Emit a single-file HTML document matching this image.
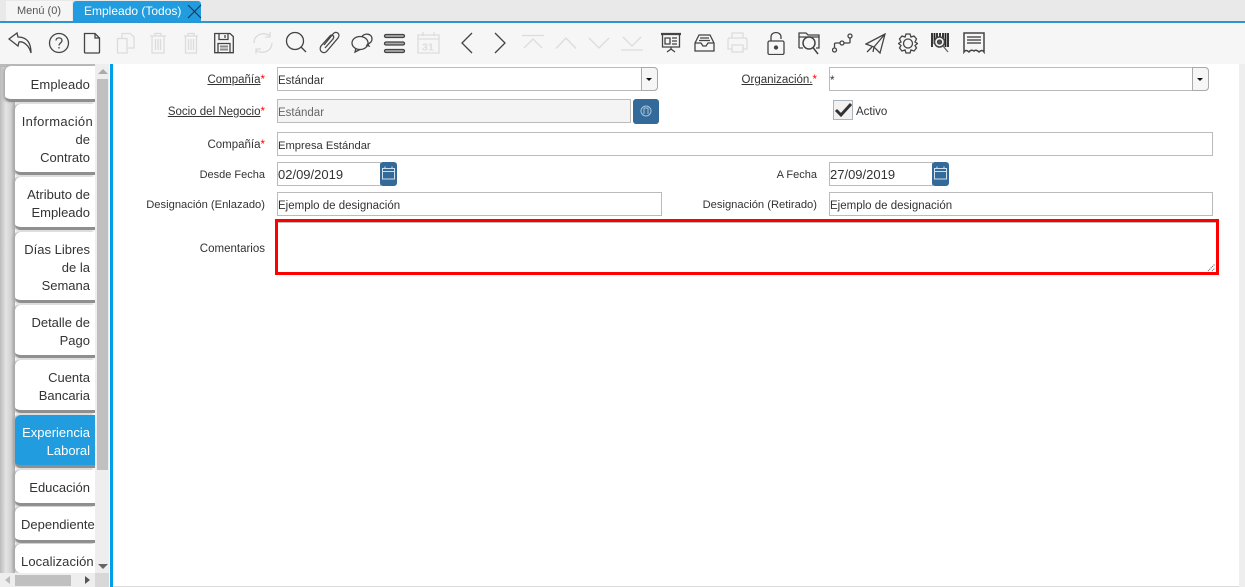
<!DOCTYPE html>
<html><head><meta charset="utf-8"><style>
html,body{margin:0;padding:0}
body{width:1245px;height:587px;position:relative;overflow:hidden;background:#fff;font-family:"Liberation Sans",sans-serif;font-size:11.5px;color:#333}
div,span,svg{position:absolute;box-sizing:border-box}
.lb{text-align:right;white-space:nowrap;line-height:16px;color:#333}
.lb u{position:static}.lb b{color:#f00;font-weight:normal}
.in{border:1px solid #bbb;background:#fff;padding-left:0;padding-top:2px;white-space:nowrap;color:#333}
.tab{left:15px;width:80px;background:#fff;border-radius:6px 0 0 6px;border-bottom:3px solid #8f8f8f;text-align:right;padding-right:5px;font-size:13px;line-height:18px;color:#333;box-shadow:-2px 0 2px #aaa;white-space:nowrap;overflow:hidden}
.ic{top:28px;fill:none;stroke:#444;stroke-width:1.3}
.f{stroke:#dcdcdc}
.btn{background:#336a99;border-radius:3px}
</style></head><body>
<div style="left:0;top:0;width:1245px;height:21px;background:#e9e9e9"></div>
<div style="left:6px;top:1px;width:66px;height:20px;background:#f5f5f5;text-align:center;font-size:11px;line-height:21px;color:#555">Menú (0)</div>
<div style="left:73px;top:1px;width:128px;height:20px;background:#219ddf;border-radius:3px 3px 0 0;color:#fff;font-size:12px;line-height:21px;padding-left:11px;white-space:nowrap">Empleado (Todos)</div>
<svg style="left:187px;top:4px" width="15" height="15" fill="none" stroke="#234" stroke-width="1.1"><path d="M1 1L14 14M14 1L1 14"/></svg>
<div style="left:0;top:21px;width:1245px;height:2px;background:#2f94cf"></div>
<div style="left:0;top:23px;width:1245px;height:41px;background:#f6f6f6"></div>

<svg class="ic" style="left:8px" width="26" height="28" stroke-width="1.500"><path d="M1 11L9 5L10 9C20 9 23 16 23 25C21 17 15 13 11 14L10 18Z"/></svg>
<svg class="ic" style="left:48px;top:29px" width="22" height="28"><circle cx="11" cy="14" r="9.500"/><path d="M8 11.500C8 8 14 8 14 11.500C14 14 11 14 11 16.500M11 18v1.500"/></svg>
<svg class="ic" style="left:83px;top:32px" width="18" height="22"><path d="M1.500 1.500H12L16.500 6V20Q16.500 21 15.500 21H2.500Q1.500 21 1.500 20ZM12 1.500V6H16.500"/></svg>
<svg class="ic f" style="left:116px;top:32px" width="20" height="22"><path d="M1.500 6.500H11V21H1.500ZM6 6.500V1.500H14L18 5V16H11"/></svg>
<svg class="ic f" style="left:149px;top:32px" width="18" height="22"><path d="M1 4H17M6 4V1.500H12V4M3 4V21H15V4M6.500 7V18M9 7V18M11.500 7V18"/></svg>
<svg class="ic f" style="left:182px;top:32px" width="18" height="22"><path d="M2 4H16M6 4V1.500H12V4M3.500 4V21H14.500V4M6.500 7V18M9 7V18M11.500 7V18"/></svg>
<svg class="ic" style="left:214px;top:32px" width="20" height="22"><path d="M.7 1.500H16L19.300 4.500V20.700H.7ZM5 1.500V7.500H14V1.500M11 3V6M4 11.500H16V20.700H4Z"/><path d="M6 14.500H14M6 17.500H14" stroke="#888" stroke-width="2"/></svg>
<svg class="ic f" style="left:252px;top:30px" width="22" height="26"><path d="M2 13C2 5 11 1 18 6M20 13C20 21 11 25 4 20M18 2V7H13M4 24V19H9"/></svg>
<svg class="ic" style="left:285px;top:31px" width="22" height="22" stroke-width="1.500"><circle cx="10" cy="10" r="8.500"/><path d="M16 16L21 21"/></svg>
<svg class="ic" style="left:318px;top:28px" width="22" height="26" stroke="#666"><path d="M6 17L15 6C18 2 23 6 20 10L9 23C6 27 0 23 3 18L12 8C14 6 17 8 15 11L7 20"/></svg>
<svg class="ic" style="left:351px" width="23" height="27"><ellipse cx="9" cy="15" rx="8" ry="6.500"/><path d="M5 20L4 24L9 21.500M11 8.500C13 5 21 5 21 11C21 14 19 15 17 16L18 18L15 17"/></svg>
<svg class="ic" style="left:383px" width="23" height="27" stroke="#555"><rect x="1.500" y="6.500" width="20" height="3" rx="1.500" fill="#aaa"/><rect x="1.500" y="14" width="20" height="3" rx="1.500" fill="#aaa"/><rect x="1.500" y="21.500" width="20" height="3" rx="1.500" fill="#aaa"/></svg>
<svg class="ic f" style="left:417px;top:31px" width="23" height="24"><path d="M1 4H22V22H1ZM1 8H22M6 1V5M17 1V5"/><text x="5" y="19.500" font-size="10.500" font-family="Liberation Sans" fill="#ddd" stroke="none" font-weight="bold">31</text></svg>

<svg class="ic" style="left:460px;top:32px" width="14" height="22" stroke="#555"><path d="M12 1L2 11L12 21"/></svg>
<svg class="ic" style="left:493px;top:32px" width="14" height="22" stroke="#555"><path d="M2 1L12 11L2 21"/></svg>
<svg class="ic f" style="left:522px;top:34px" width="22" height="16"><path d="M0 1.500H22M2 14L11 5L20 14"/></svg>
<svg class="ic f" style="left:555px;top:36px" width="22" height="14"><path d="M1 12.500L11 2L21 12.500"/></svg>
<svg class="ic f" style="left:588px;top:36px" width="22" height="14"><path d="M1 2L11 12L21 2"/></svg>
<svg class="ic f" style="left:621px;top:36px" width="22" height="16"><path d="M2 1L11 10L20 1M0 14H22"/></svg>

<svg class="ic" style="left:660px;top:32px" width="22" height="21"><path d="M1 2H21" stroke-width="2.200"/><path d="M2.500 3V15H19.500V3M5 6H10V12H5ZM12 6H17M12 9H17M12 12H17M11 15V18M7 20L11 17L15 20"/></svg>
<svg class="ic" style="left:694px;top:34px" width="21" height="18"><path d="M5 1H16L20 9V17H1V9ZM1 9H7L9 12H12L14 9H20M6 4H15M5 6.500H16"/></svg>
<svg class="ic f" style="left:727px;top:32px" width="21" height="21"><path d="M5 6V1H16V6M1 8Q1 6 3 6H18Q20 6 20 8V17H16V13H5V17H1ZM5 13V20H16V13"/></svg>
<svg class="ic" style="left:767px;top:31px" width="18" height="24"><rect x="1" y="10" width="16" height="13.500" rx="1.500"/><path d="M4 10V6C4 0 14 0 14 6V8"/><circle cx="9" cy="16.500" r="1.500" fill="#444"/></svg>
<svg class="ic" style="left:798px;top:31px" width="23" height="24"><path d="M1 17V2H8L10 4H21V17H18M1 17H5M1 6H21"/><circle cx="11" cy="12" r="6" stroke-width="1.500"/><path d="M15 16.500L20 23" stroke-width="1.500"/></svg>
<svg class="ic" style="left:832px;top:33px" width="21" height="20" stroke="#555"><circle cx="2.500" cy="17" r="2"/><circle cx="10" cy="10" r="2"/><circle cx="18" cy="3" r="2"/><path d="M2.500 15V11Q2.500 10 4 10H8M12 10H17Q18 10 18 9V5"/></svg>
<svg class="ic" style="left:865px;top:33px" width="21" height="21" stroke="#555"><path d="M1 11L20 1L15 20L9 14ZM20 1L9 14L8 19M2 19L7 14"/></svg>
<svg class="ic" style="left:898px;top:33px" width="20" height="21" stroke="#555"><path d="M8 1H12L13 4L16 3L18.500 6L17 9L19.500 10.500L17 12.500L18.500 15L16 18L13 17L12 20H8L7 17L4 18L1.500 15L3 12.500L.5 10.500L3 9L1.500 6L4 3L7 4Z"/><circle cx="10" cy="10.500" r="4.500"/></svg>
<svg class="ic" style="left:931px;top:33px" width="19" height="21"><path d="M1 0V14M3.500 0V11M6 0V5M9 0V4M12 0V5M14.500 0V14M17 0V14" stroke-width="1.800" stroke="#222"/><circle cx="8.500" cy="9" r="5" fill="#f6f6f6" stroke-width="1.500"/><circle cx="8.500" cy="9" r="2" fill="#555"/><path d="M12 13L17 19" stroke="#666"/></svg>
<svg class="ic" style="left:963px;top:32px" width="22" height="22" stroke="#222"><path d="M1 1H21V20Q19 17 16 20Q13 17 11 19Q8 17 6 20Q3 17 1 20Z" stroke-width="1.500"/><path d="M4 5H18M4 8H18M4 11H18" stroke="#555" stroke-width="1.500"/></svg>

<div style="left:0;top:64px;width:15px;height:509px;background:linear-gradient(90deg,#bbb,#e4e4e4 40%,#d0d0d0 75%,#aaa)"></div>
<div style="left:0;top:64px;width:95px;height:3px;background:#bbb"></div>
<div class="tab" style="left:5px;width:90px;top:66px;height:36px;line-height:37px;letter-spacing:.1px">Empleado</div>
<div class="tab" style="top:104px;height:71px;padding-top:9px;padding-right:2px"><span style="position:static;letter-spacing:.3px">Información</span><br><span style="position:static;padding-right:3px">de</span><br><span style="position:static;padding-right:3px">Contrato</span></div>
<div class="tab" style="top:177px;height:53px;padding-top:9px">Atributo de<br>Empleado</div>
<div class="tab" style="top:232px;height:71px;padding-top:9px">Días Libres<br>de la<br>Semana</div>
<div class="tab" style="top:305px;height:53px;padding-top:9px">Detalle de<br>Pago</div>
<div class="tab" style="top:360px;height:53px;padding-top:9px">Cuenta<br>Bancaria</div>
<div class="tab" style="top:415px;height:53px;padding-top:9px;background:#219ddf;color:#fff">Experiencia<br>Laboral</div>
<div class="tab" style="top:470px;height:36px;line-height:36px">Educación</div>
<div class="tab" style="top:507px;height:36px;line-height:36px;text-align:left;padding-left:6px;padding-right:0">Dependientes</div>
<div class="tab" style="top:544px;height:29px;border-bottom:0;padding-top:9px;text-align:left;padding-left:6px;letter-spacing:.1px">Localización</div>

<div style="left:95px;top:64px;width:14px;height:509px;background:#eee"></div>
<div style="left:97px;top:79px;width:11px;height:391px;background:#c0c0c0"></div>
<div style="left:98px;top:69px;width:0;height:0;border:5px solid transparent;border-bottom:5px solid #aaa;border-top:0"></div>
<div style="left:98px;top:564px;width:0;height:0;border:5px solid transparent;border-top:5px solid #666;border-bottom:0"></div>
<div style="left:0;top:573px;width:95px;height:14px;background:#eee"></div>
<div style="left:95px;top:573px;width:14px;height:14px;background:#d8d8d8"></div>
<div style="left:15px;top:575px;width:56px;height:11px;background:#c0c0c0"></div>
<div style="left:5px;top:576px;width:0;height:0;border:4px solid transparent;border-right:5px solid #bbb;border-left:0"></div>
<div style="left:85px;top:576px;width:0;height:0;border:4px solid transparent;border-left:5px solid #555;border-right:0"></div>
<div style="left:110px;top:64px;width:3px;height:523px;background:#00a0e8"></div>
<div style="left:1239px;top:64px;width:6px;height:523px;background:#eee"></div>
<div style="left:113px;top:586px;width:1126px;height:1px;background:#ddd"></div>

<div class="lb" style="right:980px;top:72px"><u>Compañía</u><b>*</b></div>
<div class="in" style="left:277px;top:67px;width:381px;height:24px;line-height:22px;border-radius:0 4px 4px 0">Estándar</div>
<div style="left:641px;top:67px;width:17px;height:24px;border:1px solid #aaa;border-radius:0 4px 4px 0;background:#f6f6f6"></div>
<div style="left:646px;top:78px;width:0;height:0;border:3px solid transparent;border-top:3px solid #111;border-bottom:0"></div>
<div class="lb" style="right:428px;top:72px"><u>Organización.</u><b>*</b></div>
<div class="in" style="left:829px;top:67px;width:380px;height:24px;line-height:22px;border-radius:0 4px 4px 0">*</div>
<div style="left:1192px;top:67px;width:17px;height:24px;border:1px solid #aaa;border-radius:0 4px 4px 0;background:#f6f6f6"></div>
<div style="left:1197px;top:78px;width:0;height:0;border:3px solid transparent;border-top:3px solid #111;border-bottom:0"></div>

<div class="lb" style="right:980px;top:104px"><u>Socio del Negocio</u><b>*</b></div>
<div class="in" style="left:277px;top:99px;width:354px;height:24px;line-height:22px;background:#f4f4f4;color:#666">Estándar</div>
<div class="btn" style="left:633px;top:99px;width:26px;height:25px"></div>
<svg style="left:640px;top:105px" width="12" height="12" fill="none" stroke="#a9c4dc"><circle cx="6" cy="6" r="5"/><path d="M4 3V9M8 3V9M4 3H8"/></svg>
<div style="left:833px;top:100px;width:20px;height:20px;border:1px solid #aab4bc;background:#f2f2f2"></div>
<svg style="left:834px;top:101px" width="19" height="18" fill="none" stroke="#333" stroke-width="3"><path d="M2 9L7 14L17 3"/></svg>
<div class="lb" style="left:856px;top:104px">Activo</div>

<div class="lb" style="right:980px;top:137px">Compañía<b>*</b></div>
<div class="in" style="left:277px;top:132px;width:936px;height:24px;line-height:22px;font-size:11.200px">Empresa Estándar</div>

<div class="lb" style="right:980px;top:167px;font-size:11px">Desde Fecha</div>
<div class="in" style="left:277px;top:162px;width:104px;height:24px;line-height:22px;font-size:13px;padding-top:1px">02/09/2019</div>
<div class="btn" style="left:380px;top:162px;width:17px;height:24px"></div>
<svg style="left:382px;top:166px" width="13" height="14" fill="none" stroke="#cfe0ee"><path d="M.5 2.500H12.500V13H.5ZM.5 5.500H12.500M3 .5V3M10 .5V3"/></svg>
<div class="lb" style="right:428px;top:167px;font-size:11px">A Fecha</div>
<div class="in" style="left:829px;top:162px;width:104px;height:24px;line-height:22px;font-size:13px;padding-top:1px">27/09/2019</div>
<div class="btn" style="left:932px;top:162px;width:17px;height:24px"></div>
<svg style="left:934px;top:166px" width="13" height="14" fill="none" stroke="#cfe0ee"><path d="M.5 2.500H12.500V13H.5ZM.5 5.500H12.500M3 .5V3M10 .5V3"/></svg>

<div class="lb" style="right:980px;top:197px;font-size:11.200px">Designación (Enlazado)</div>
<div class="in" style="left:277px;top:192px;width:385px;height:24px;line-height:22px">Ejemplo de designación</div>
<div class="lb" style="right:428px;top:197px;font-size:11.200px">Designación (Retirado)</div>
<div class="in" style="left:829px;top:192px;width:384px;height:24px;line-height:22px">Ejemplo de designación</div>

<div class="lb" style="right:980px;top:241px">Comentarios</div>
<div style="left:275px;top:219px;width:944px;height:56px;border:3px solid #f00;background:#fff"></div>
<div style="left:278px;top:222px;width:938px;height:1px;background:#bbb"></div>
<svg style="left:1207px;top:263px" width="9" height="9" stroke="#555" stroke-dasharray="1 1"><path d="M1 8L8 1M5 8L8 5"/></svg>
</body></html>
